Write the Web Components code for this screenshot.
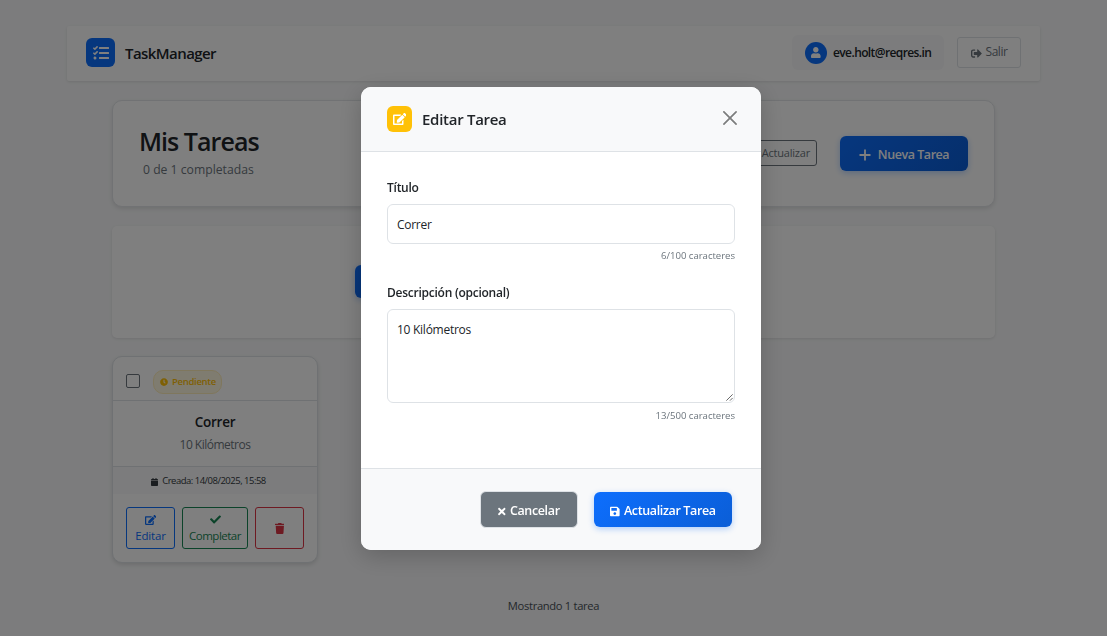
<!DOCTYPE html>
<html lang="es">
<head>
<meta charset="utf-8">
<title>TaskManager</title>
<style>
html,body{margin:0;height:100%;overflow:hidden}
body{background:#f8f9fa;font-family:"Open Sans","Noto Sans",sans-serif;font-size:12px;color:#212529}
</style>
</head>
<body>
<task-app></task-app>
<script>
const ICONS={
tasks:['0 0 512 512','M139.6 35.5a12 12 0 0 0-17 0L58.9 98.8l-22.7-22.1a12 12 0 0 0-17 0L3.5 92.4a12 12 0 0 0 0 17l47.6 47.4a12.8 12.8 0 0 0 17.6 0l15.6-15.5L156.5 69a12 12 0 0 0 .1-17zm0 159.2a12 12 0 0 0-17 0l-63.7 63.7-22.7-22.1a12 12 0 0 0-17 0L3.5 252a12 12 0 0 0 0 17L51 316.5a12.8 12.8 0 0 0 17.6 0l15.7-15.7 72.2-72.2a12 12 0 0 0 .1-16.9zM64 368c-26.5 0-48.6 21.5-48.6 48s22.1 48 48.6 48a48 48 0 0 0 0-96zm432 16H208a16 16 0 0 0-16 16v32a16 16 0 0 0 16 16h288a16 16 0 0 0 16-16v-32a16 16 0 0 0-16-16zm0-320H208a16 16 0 0 0-16 16v32a16 16 0 0 0 16 16h288a16 16 0 0 0 16-16V80a16 16 0 0 0-16-16zm0 160H208a16 16 0 0 0-16 16v32a16 16 0 0 0 16 16h288a16 16 0 0 0 16-16v-32a16 16 0 0 0-16-16z'],
user:['0 0 448 512','M224 256c70.7 0 128-57.3 128-128S294.700 0 224 0 96 57.300 96 128s57.300 128 128 128zm89.600 32h-16.700c-22.200 10.200-46.900 16-72.900 16s-50.600-5.800-72.900-16h-16.700C60.200 288 0 348.200 0 422.400V464c0 26.500 21.500 48 48 48h352c26.500 0 48-21.500 48-48v-41.600c0-74.200-60.200-134.400-134.400-134.400z'],
out:['0 0 512 512','M497 273L329 441c-15 15-41 4.500-41-17v-96H152c-13.300 0-24-10.700-24-24v-96c0-13.300 10.700-24 24-24h136V88c0-21.400 25.900-32 41-17l168 168c9.300 9.400 9.300 24.600 0 34zM192 436v-40c0-6.600-5.400-12-12-12H96c-17.700 0-32-14.300-32-32V160c0-17.700 14.300-32 32-32h84c6.600 0 12-5.400 12-12V76c0-6.600-5.400-12-12-12H96c-53 0-96 43-96 96v192c0 53 43 96 96 96h84c6.600 0 12-5.400 12-12z'],
plus:['0 0 12 12','M5.100 .5h1.800v4.600h4.600v1.800H6.900v4.600H5.100V6.900H.5V5.100h4.600z'],
edit:['0 0 576 512','M402.6 83.2l90.2 90.2c3.8 3.8 3.8 10 0 13.8L274.4 405.6l-92.8 10.3c-12.4 1.4-22.900-9.100-21.500-21.500l10.300-92.800L388.800 83.200c3.800-3.800 10-3.800 13.800 0zm162-22.900l-48.800-48.800c-15.200-15.200-39.900-15.200-55.200 0l-35.400 35.400c-3.800 3.800-3.800 10 0 13.800l90.200 90.200c3.800 3.800 10 3.800 13.800 0l35.400-35.400c15.200-15.300 15.200-40 0-55.200zM384 346.200V448H64V128h229.800c3.200 0 6.200-1.300 8.500-3.500l40-40c7.600-7.600 2.100-20.500-8.500-20.500H48C21.500 64 0 85.500 0 112v352c0 26.500 21.500 48 48 48h352c26.500 0 48-21.500 48-48V306.200c0-10.700-12.900-16-20.500-8.500l-40 40c-2.200 2.300-3.500 5.300-3.500 8.500z'],
clock:['0 0 512 512','M256 8C119 8 8 119 8 256s111 248 248 248 248-111 248-248S393 8 256 8zm57.100 350.100L224.900 294c-3.100-2.300-4.900-5.900-4.900-9.700V116c0-6.600 5.400-12 12-12h48c6.600 0 12 5.400 12 12v137.700l63.500 46.200c5.400 3.900 6.500 11.400 2.600 16.800l-28.200 38.800c-3.900 5.300-11.400 6.500-16.800 2.600z'],
calendar:['0 0 448 512','M12 192h424c6.600 0 12 5.400 12 12v260c0 26.500-21.500 48-48 48H48c-26.500 0-48-21.500-48-48V204c0-6.600 5.400-12 12-12zm436-44v-36c0-26.500-21.500-48-48-48h-48V12c0-6.600-5.400-12-12-12h-40c-6.600 0-12 5.400-12 12v52H160V12c0-6.600-5.400-12-12-12h-40c-6.600 0-12 5.400-12 12v52H48C21.500 64 0 85.500 0 112v36c0 6.600 5.400 12 12 12h424c6.600 0 12-5.400 12-12z'],
check:['0 0 512 512','M173.900 439.400L7.500 273c-10-10-10-26.200 0-36.200l36.200-36.200c10-10 26.200-10 36.200 0L192 312.700 432.100 72.600c10-10 26.200-10 36.200 0l36.200 36.200c10 10 10 26.200 0 36.200L210.100 439.400c-10 10-26.200 10-36.200 0z'],
trash:['0 0 448 512','M432 32H312l-9.400-18.700A24 24 0 0 0 281.100 0H166.800a23.700 23.700 0 0 0-21.400 13.300L136 32H16A16 16 0 0 0 0 48v32a16 16 0 0 0 16 16h416a16 16 0 0 0 16-16V48a16 16 0 0 0-16-16zM53.200 467a48 48 0 0 0 47.900 45h245.800a48 48 0 0 0 47.900-45L416 128H32z'],
times:['0 0 352 512','M242.700 256l100.100-100.100c12.300-12.300 12.300-32.200 0-44.500l-22.200-22.200c-12.300-12.300-32.200-12.300-44.500 0L176 189.300 75.900 89.200c-12.300-12.300-32.200-12.300-44.500 0L9.200 111.400c-12.300 12.300-12.300 32.200 0 44.500L109.300 256 9.200 356.100c-12.300 12.300-12.300 32.200 0 44.500l22.200 22.200c12.300 12.300 32.200 12.300 44.500 0L176 322.700l100.100 100.100c12.300 12.300 32.200 12.300 44.500 0l22.200-22.200c12.300-12.300 12.300-32.200 0-44.500z'],
save:['0 0 448 512','M433.900 129.900l-83.900-83.900A48 48 0 0 0 316.100 32H48C21.500 32 0 53.500 0 80v352c0 26.500 21.500 48 48 48h352c26.500 0 48-21.500 48-48V163.900a48 48 0 0 0-14.100-34zM224 416c-35.300 0-64-28.700-64-64s28.700-64 64-64 64 28.700 64 64-28.700 64-64 64zm96-304.500V212c0 6.600-5.400 12-12 12H76c-6.600 0-12-5.400-12-12V108c0-6.600 5.400-12 12-12h228.500c3.200 0 6.200 1.300 8.500 3.500l3.500 3.500a12 12 0 0 1 3.500 8.500z'],
close:['0 0 16 16','M.3.3a1 1 0 0 1 1.400 0L8 6.600 14.300.3a1 1 0 0 1 1.400 1.400L9.400 8l6.300 6.300a1 1 0 0 1-1.400 1.400L8 9.400l-6.300 6.300a1 1 0 0 1-1.400-1.400L6.600 8 .3 1.700a1 1 0 0 1 0-1.400z']
};
function define(name,html){
  customElements.define(name,class extends HTMLElement{
    constructor(){super();const t=document.createElement('template');t.innerHTML=html;
      this.attachShadow({mode:'open'}).append(t.content.cloneNode(true));}
  });
}
customElements.define('ui-icon',class extends HTMLElement{
  constructor(){super();this.attachShadow({mode:'open'});}
  connectedCallback(){
    const [box,path]=ICONS[this.getAttribute('name')];
    const [, , w,h]=box.split(' ').map(Number),s=+this.getAttribute('size')||10;
    this.shadowRoot.innerHTML=`<style>:host{display:inline-flex;flex:none}svg{display:block;fill:currentColor}</style><svg viewBox="${box}" width="${s*w/h}" height="${s}"><path d="${path}"/></svg>`;
  }
});
define('ui-button',`<style>
:host{display:flex;align-items:center;justify-content:center;box-sizing:border-box;border:1px solid;border-radius:3px;white-space:nowrap;line-height:16px}
:host([kind=primary]){border:0;border-radius:6px;color:#fff;font-weight:600;background:linear-gradient(135deg,#0d6efd,#0b5ed7);box-shadow:0 2px 6px rgba(13,110,253,.3)}
:host([kind=secondary]){border:1px solid #dee2e6;border-radius:6px;color:#fff;font-weight:600;background:#6c757d}
</style><slot></slot>`);
define('task-nav',`<style>
:host{display:flex;align-items:center;box-sizing:border-box;width:973px;height:55px;margin:0 0 0 67px;padding:0 19px 2px;background:#fff;border-radius:2px;box-shadow:0 1px 3px rgba(0,0,0,.1)}
.logo{width:29px;height:29px;border-radius:6px;background:#0d6efd;color:#fff;display:grid;place-items:center}
.brand{margin:1px auto 0 10px;font-size:15px;font-weight:600;letter-spacing:-.57px;line-height:20px}
.user{display:flex;align-items:center;height:35px;width:152px;box-sizing:border-box;padding:0 0 0 13px;border-radius:6px;background:#f8f9fa;margin-right:13px;font-size:12px;font-weight:600;letter-spacing:-.6px}
.user>span:last-child{margin-top:-1px}
.avatar{width:22px;height:22px;border-radius:50%;background:#0d6efd;color:#fff;display:grid;place-items:center;margin-right:6px}
ui-button{width:64px;height:31px;border-color:#dee2e6;color:#6c757d;gap:4px;font-size:12px;letter-spacing:-.45px}
ui-button span{margin-top:-1px}
ui-button ui-icon{margin-top:2px}
</style>
<div class="logo"><ui-icon name="tasks" size="16"></ui-icon></div><div class="brand">TaskManager</div>
<div class="user"><span class="avatar"><ui-icon name="user" size="11"></ui-icon></span><span>eve.holt@reqres.in</span></div>
<ui-button><ui-icon name="out" size="11"></ui-icon><span>Salir</span></ui-button>`);
define('page-heading',`<style>
:host{display:flex;align-items:center;box-sizing:border-box;width:883px;height:107px;margin:19px 0 0 112px;padding:0 26px;background:#fff;border:1px solid #e2e5e8;border-radius:10px;box-shadow:0 2px 4px rgba(0,0,0,.1)}
.titles{margin-right:auto}
h1{margin:-3px 0 0;font-size:25px;font-weight:600;line-height:32px;letter-spacing:-.95px}
p{margin:4px 0 0 4px;font-size:12.200px;line-height:18px;color:#6c757d}
.refresh{width:90px;height:26px;justify-content:flex-end;padding-right:6px;margin:-1px 23px 0 0;color:#6c757d;border-color:#6c757d;font-size:11px;letter-spacing:-.2px}
.new{width:128px;height:35px;gap:7px;font-size:12.500px;letter-spacing:-.45px}
.new ui-icon{margin-top:3px}
.new span{margin-top:2px}
</style>
<div class="titles"><h1>Mis Tareas</h1><p>0 de 1 completadas</p></div>
<ui-button class="refresh">Actualizar</ui-button>
<ui-button class="new" kind="primary"><ui-icon name="plus" size="12"></ui-icon><span>Nueva Tarea</span></ui-button>`);
define('filter-bar',`<style>
:host{display:flex;align-items:center;box-sizing:border-box;width:883px;height:112px;margin:19px 0 0 112px;padding:0 0 2px 243px;background:#fff;border-radius:5px;box-shadow:0 1px 3px rgba(0,0,0,.1)}
ui-button{width:70px;height:33px}
</style><ui-button kind="primary"></ui-button>`);
define('task-card',`<style>
:host{display:flex;flex-direction:column;box-sizing:border-box;width:206px;height:207px;margin:18px 0 0 112px;background:#fff;border:1px solid #dee2e6;border-radius:10px;overflow:hidden;box-shadow:0 2px 4px rgba(0,0,0,.12)}
.top{display:flex;align-items:center;padding:6px 13px 0;box-sizing:border-box;border-bottom:1px solid #dee2e6;height:44px}
.box{width:12px;height:12px;border:1px solid #6c757d;border-radius:2px;margin:-1px 13px 0 0}
.badge{display:flex;align-items:center;gap:4px;box-sizing:border-box;width:69px;height:24px;padding-left:6px;border:1px solid #ffeeba;border-radius:10px;background:#fff8e1;color:#ffc107;font-size:9.500px;font-weight:600;letter-spacing:-.3px}
.body{height:65px;box-sizing:border-box;padding-top:11px;text-align:center}
b{display:block;font-size:13.500px;font-weight:600;line-height:20px;letter-spacing:-.25px}
.body span{display:block;font-size:12px;line-height:18px;margin-top:4px;color:#6c757d;letter-spacing:-.5px}
.date{height:28px;box-sizing:border-box;display:flex;align-items:center;justify-content:center;gap:4px;padding-right:13px;padding-left:0;background:#f8f9fa;border-top:1px solid #dee2e6;font-size:9.500px;letter-spacing:-.5px;color:#343a40}
.date ui-icon{margin-top:2px}
.actions{display:flex;gap:7px;padding:13px 13px}
ui-button{height:42px;width:49px;flex-direction:column;font-size:11.500px;letter-spacing:-.2px;gap:0}
.e{color:#0d6efd}.c{color:#198754;width:66px;letter-spacing:-.5px}.d{color:#dc3545}
.e ui-icon,.c ui-icon{margin:2px 0 3px}
</style>
<div class="top"><span class="box"></span><span class="badge"><ui-icon name="clock" size="8"></ui-icon><span>Pendiente</span></span></div>
<div class="body"><b>Correr</b><span>10 Kilómetros</span></div>
<div class="date"><ui-icon name="calendar" size="8"></ui-icon><span>Creada: 14/08/2025, 15:58</span></div>
<div class="actions"><ui-button class="e"><ui-icon name="edit" size="10"></ui-icon><span>Editar</span></ui-button><ui-button class="c"><ui-icon name="check" size="11"></ui-icon><span>Completar</span></ui-button><ui-button class="d"><ui-icon name="trash" size="11"></ui-icon></ui-button></div>`);
define('form-field',`<style>
:host{display:block}
.label{font-size:12px;font-weight:600;line-height:18px;letter-spacing:-.25px}
.control{position:relative;box-sizing:border-box;width:348px;height:var(--h,40px);margin-top:7px;padding:10px 9px;border:1px solid #dee2e6;border-radius:6px;background:#fff;font-size:12px;line-height:19px;letter-spacing:-.27px}
.grip{display:none;position:absolute;right:0;bottom:0}
:host([multiline]) .grip{display:block}
.count{text-align:right;font-size:9.600px;line-height:14px;margin-top:var(--count-gap,5px);color:#6c757d;letter-spacing:-.03px}
</style><div class="label"><slot name="label"></slot></div><div class="control"><slot></slot><svg class="grip" width="9" height="9" viewBox="0 0 10 10" fill="none" stroke="#444" stroke-width=".9"><path d="M1.500 8.500l7-7M5.500 8.500l3-3"/></svg></div><div class="count"><slot name="count"></slot></div>`);
define('edit-modal',`<style>
:host{position:fixed;inset:0;background:rgba(0,0,0,.5)}
.dialog{display:flex;flex-direction:column;width:400px;height:463px;margin:87px 0 0 361px;background:#fff;border-radius:10px;overflow:hidden;box-shadow:0 6px 24px rgba(0,0,0,.2)}
header{display:flex;align-items:center;box-sizing:border-box;height:65px;padding:0 24.500px 0 26px;background:#f8f9fa;border-bottom:1px solid #dee2e6}
.mark{width:25px;height:26px;border-radius:6px;background:#ffc107;color:#fff;display:grid;place-items:center}
h2{margin:0 auto 0 10px;font-size:15px;font-weight:600;line-height:22px;letter-spacing:-.28px}
header>ui-icon{color:#7c7d7d;margin-top:-2px}
main{height:316px;padding:27px 26px 0;box-sizing:border-box}
.desc{--h:94px;--count-gap:6px;margin-top:21px}
footer{display:flex;align-items:center;justify-content:flex-end;gap:16px;box-sizing:border-box;height:82px;padding:0 29px 0 0;background:#f8f9fa;border-top:1px solid #dee2e6;font-size:12.500px;letter-spacing:-.36px}
ui-button{width:138px;height:35px;gap:4px}
.cancel{width:98px;height:37px}
footer ui-icon{margin-top:3px}
footer span{margin-top:2px}
</style>
<div class="dialog">
<header><span class="mark"><ui-icon name="edit" size="12"></ui-icon></span><h2>Editar Tarea</h2><ui-icon name="close" size="14"></ui-icon></header>
<main><form-field><span slot="label">Título</span>Correr<span slot="count">6/100 caracteres</span></form-field>
<form-field class="desc" multiline><span slot="label">Descripción (opcional)</span>10 Kilómetros<span slot="count">13/500 caracteres</span></form-field></main>
<footer><ui-button class="cancel" kind="secondary"><ui-icon name="times" size="11"></ui-icon><span>Cancelar</span></ui-button><ui-button kind="primary"><ui-icon name="save" size="11"></ui-icon><span>Actualizar Tarea</span></ui-button></footer>
</div>`);
define('task-app',`<style>
:host{display:block;padding-top:26px}
.total{margin:34px 0 0;text-align:center;font-size:11.200px;line-height:18px;color:#495057;letter-spacing:-.32px}
</style><task-nav></task-nav><page-heading></page-heading><filter-bar></filter-bar><task-card></task-card><p class="total">Mostrando 1 tarea</p><edit-modal></edit-modal>`);
</script>
</body>
</html>
